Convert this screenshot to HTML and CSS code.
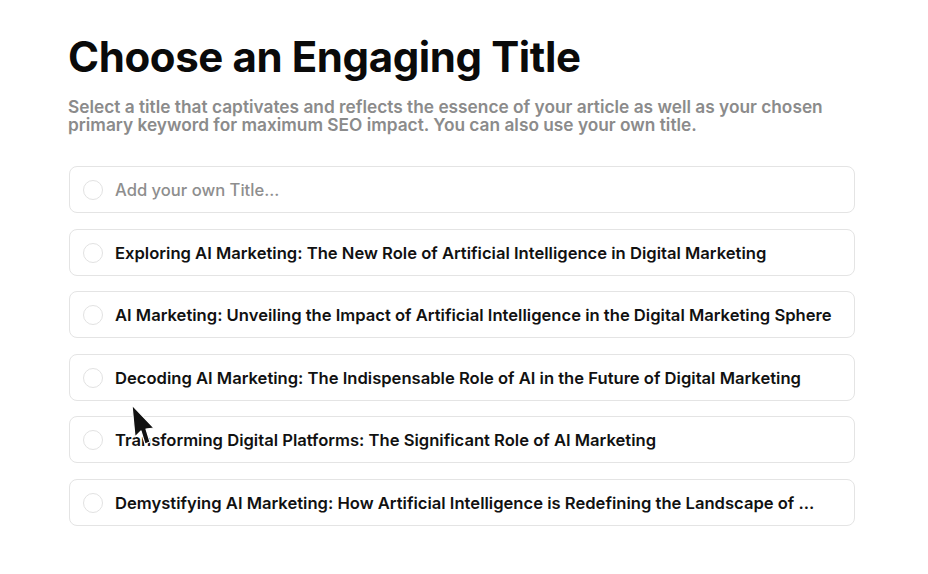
FILE: index.html
```html
<!DOCTYPE html>
<html lang="en">
<head>
<meta charset="utf-8">
<title>Choose an Engaging Title</title>
<link rel="stylesheet" href="styles.css">
</head>
<body>
<main class="page">
  <h1 class="title">Choose an Engaging Title</h1>
  <p class="subtitle">Select a title that captivates and reflects the essence of your article as well as your chosen primary keyword for maximum SEO impact. You can also use your own title.</p>
  <ul class="options">
    <li class="option"><span class="radio"></span><span class="placeholder">Add your own Title...</span></li>
    <li class="option"><span class="radio"></span><span class="label">Exploring AI Marketing: The New Role of Artificial Intelligence in Digital Marketing</span></li>
    <li class="option"><span class="radio"></span><span class="label">AI Marketing: Unveiling the Impact of Artificial Intelligence in the Digital Marketing Sphere</span></li>
    <li class="option"><span class="radio"></span><span class="label">Decoding AI Marketing: The Indispensable Role of AI in the Future of Digital Marketing</span></li>
    <li class="option"><span class="radio"></span><span class="label">Transforming Digital Platforms: The Significant Role of AI Marketing</span></li>
    <li class="option"><span class="radio"></span><span class="label">Demystifying AI Marketing: How Artificial Intelligence is Redefining the Landscape of ...</span></li>
  </ul>
</main>
<svg class="cursor" width="26" height="44" viewBox="0 0 26 44" aria-hidden="true">
  <path d="M1 1 L4 33 L10 27 L14 40 L19 38 L15 25 L23 24 Z" fill="#111" stroke="#fff" stroke-width="1.2" stroke-linejoin="round"/>
</svg>
</body>
</html>
```
FILE: styles.css
```css
* { box-sizing: border-box; }
html, body { margin: 0; padding: 0; background: #fff; }
body {
  font-family: Inter, "Noto Sans", "Liberation Sans", sans-serif;
  color: #111;
  width: 928px;
  height: 574px;
  overflow: hidden;
  position: relative;
}
.page {
  padding: 31px 73px 0 68px;
}
.title {
  margin: 0;
  font-size: 42px;
  font-weight: 650;
  line-height: 52px;
  letter-spacing: -0.4px;
  color: #0a0a0a;
}
.subtitle {
  margin: 15px 0 0;
  font-size: 17.3px;
  font-weight: 600;
  line-height: 18px;
  color: #8b8b8b;
}
.options {
  list-style: none;
  margin: 32px 0 0;
  padding: 0 0 0 1px;
  display: flex;
  flex-direction: column;
  gap: 15.5px;
}
.option {
  height: 47px;
  border: 1.5px solid #e4e4e4;
  border-radius: 8px;
  display: flex;
  align-items: center;
  padding-left: 13px;
  padding-top: 1px;
  gap: 12px;
  font-size: 16.6px;
  font-weight: 600;
  white-space: nowrap;
}
.radio {
  width: 20px;
  height: 20px;
  border: 1.5px solid #e2e2e2;
  border-radius: 50%;
  flex: none;
}
.placeholder { color: #8e8e8e; font-weight: 500; }
.label { color: #111; }
.cursor {
  position: absolute;
  left: 131px;
  top: 404px;
}
```
